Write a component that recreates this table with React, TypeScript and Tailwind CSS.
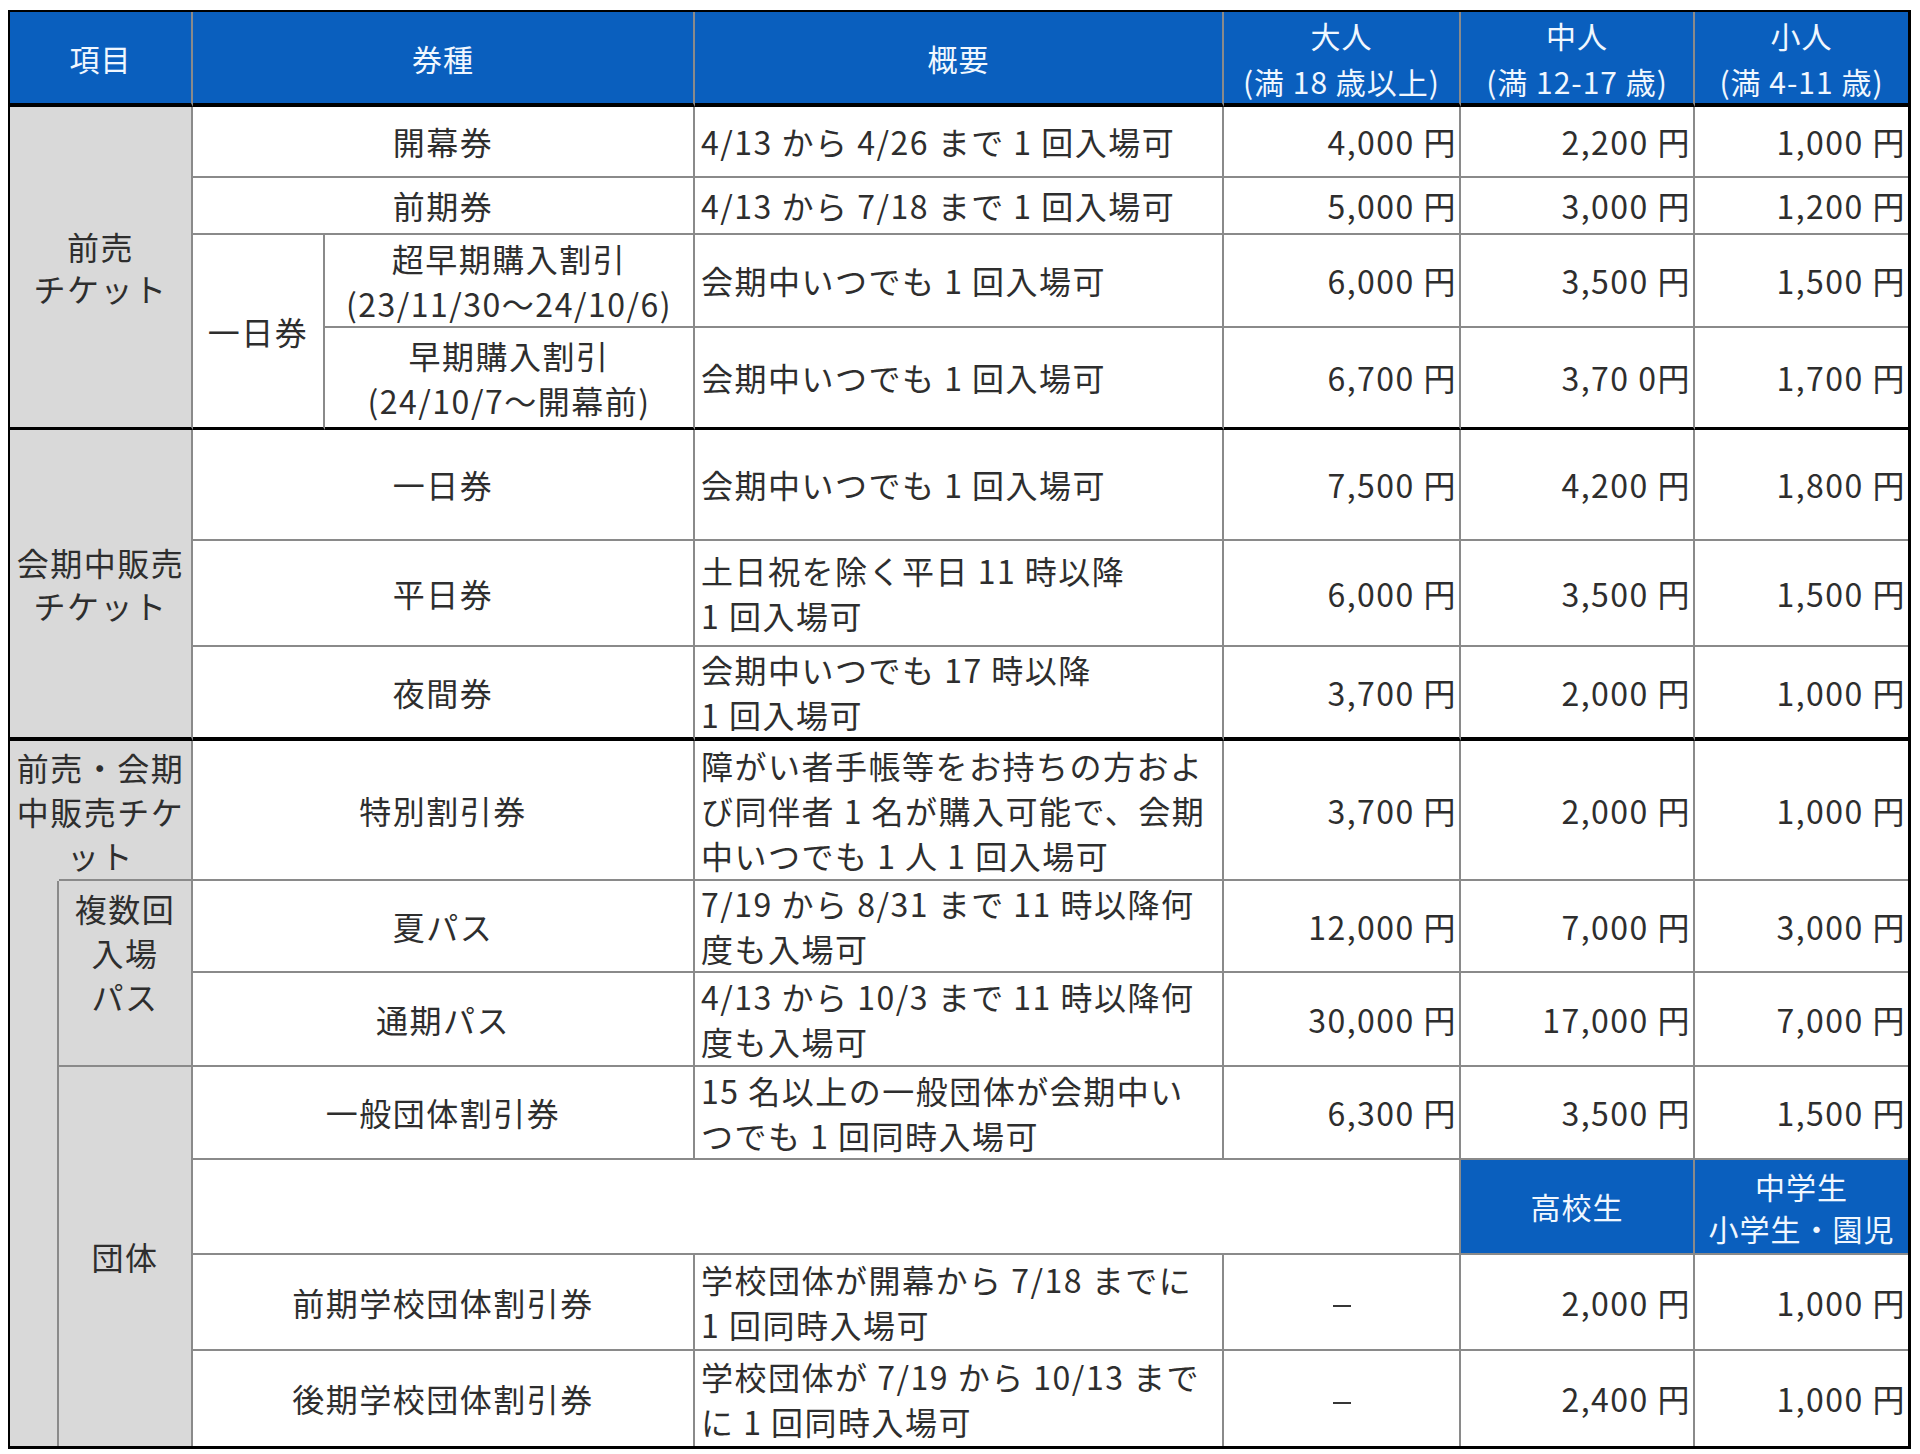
import React from "react";

type Bottom = "thin" | "thick" | "heavy" | "none";

const BOTTOM: Record<Bottom, string> = {
  thin: "border-b-2",
  thick: "border-b-[3px] border-b-black",
  heavy: "border-b-4 border-b-black",
  none: "",
};

// grid rows, written out so tailwind picks them up
const ROW: Record<number, string> = {
  1: "row-start-1",
  2: "row-start-2",
  3: "row-start-3",
  4: "row-start-4",
  5: "row-start-5",
  6: "row-start-6",
  7: "row-start-7",
  8: "row-start-8",
  9: "row-start-9",
  10: "row-start-10",
  11: "row-start-11",
  12: "row-start-12",
  13: "row-start-13",
  14: "row-start-14",
  15: "row-start-15",
};

const Cell = ({
  className = "",
  bottom = "thin",
  last = false,
  children,
}: {
  className?: string;
  bottom?: Bottom;
  last?: boolean;
  children?: React.ReactNode;
}) => (
  <div
    className={`flex items-center border-[#8a8a8a] whitespace-pre ${last ? "" : "border-r-2"} ${BOTTOM[bottom]} ${className}`}
  >
    {children}
  </div>
);

const Head = ({ className = "", last = false, children }: { className?: string; last?: boolean; children: React.ReactNode }) => (
  <Cell
    bottom="heavy"
    last={last}
    className={`row-start-1 justify-center text-center bg-[#0a5fbe] text-[#f0f7ff] text-[30px] tracking-[1px] leading-[46px] ${className}`}
  >
    {children}
  </Cell>
);

const Label = ({ row, bottom = "thin", children }: { row: number; bottom?: Bottom; children: React.ReactNode }) => (
  <Cell bottom={bottom} className={`${ROW[row]} col-start-3 col-span-2 justify-center text-center`}>
    {children}
  </Cell>
);

const Desc = ({ row, bottom = "thin", children }: { row: number; bottom?: Bottom; children: React.ReactNode }) => (
  <Cell bottom={bottom} className={`${ROW[row]} col-start-5 pl-[6px]`}>
    {children}
  </Cell>
);

const Prices = ({ row, bottom = "thin", prices }: { row: number; bottom?: Bottom; prices: string[] }) => (
  <>
    <Cell bottom={bottom} className={`${ROW[row]} col-start-6 ${prices[0] === "－" ? "justify-center" : "justify-end pr-[2px]"}`}>
      {prices[0] === "－" ? <span className="inline-block w-[18px] h-[2px] mt-[8px] bg-[#363636]" /> : prices[0]}
    </Cell>
    <Cell bottom={bottom} className={`${ROW[row]} col-start-7 justify-end pr-[2px]`}>
      {prices[1]}
    </Cell>
    <Cell bottom={bottom} last className={`${ROW[row]} col-start-8 justify-end pr-[2px]`}>
      {prices[2]}
    </Cell>
  </>
);

const simpleRows: { row: number; bottom?: Bottom; label: string; desc: string; prices: string[] }[] = [
  { row: 2, label: "開幕券", desc: "4/13 から 4/26 まで 1 回入場可", prices: ["4,000 円", "2,200 円", "1,000 円"] },
  { row: 3, label: "前期券", desc: "4/13 から 7/18 まで 1 回入場可", prices: ["5,000 円", "3,000 円", "1,200 円"] },
  { row: 6, label: "一日券", desc: "会期中いつでも 1 回入場可", prices: ["7,500 円", "4,200 円", "1,800 円"] },
  { row: 7, label: "平日券", desc: "土日祝を除く平日 11 時以降\n1 回入場可", prices: ["6,000 円", "3,500 円", "1,500 円"] },
  { row: 8, bottom: "heavy", label: "夜間券", desc: "会期中いつでも 17 時以降\n1 回入場可", prices: ["3,700 円", "2,000 円", "1,000 円"] },
  {
    row: 9,
    label: "特別割引券",
    desc: "障がい者手帳等をお持ちの方およ\nび同伴者 1 名が購入可能で、会期\n中いつでも 1 人 1 回入場可",
    prices: ["3,700 円", "2,000 円", "1,000 円"],
  },
  { row: 10, label: "夏パス", desc: "7/19 から 8/31 まで 11 時以降何\n度も入場可", prices: ["12,000 円", "7,000 円", "3,000 円"] },
  { row: 11, label: "通期パス", desc: "4/13 から 10/3 まで 11 時以降何\n度も入場可", prices: ["30,000 円", "17,000 円", "7,000 円"] },
  { row: 12, label: "一般団体割引券", desc: "15 名以上の一般団体が会期中い\nつでも 1 回同時入場可", prices: ["6,300 円", "3,500 円", "1,500 円"] },
  { row: 14, label: "前期学校団体割引券", desc: "学校団体が開幕から 7/18 までに\n1 回同時入場可", prices: ["－", "2,000 円", "1,000 円"] },
  { row: 15, bottom: "none", label: "後期学校団体割引券", desc: "学校団体が 7/19 から 10/13 まで\nに 1 回同時入場可", prices: ["－", "2,400 円", "1,000 円"] },
];

export default function App() {
  return (
    <div className="w-[1920px] h-[1454px] bg-white pt-[10px] pl-[8px] font-['Noto_Sans_CJK_JP',sans-serif]">
      <div className="grid w-max grid-cols-[49px_134px_132px_370px_529px_237px_234px_213px] grid-rows-[95px_71px_57px_93px_102px_111px_106px_94px_140px_92px_94px_93px_95px_96px_95px] border-t-2 border-l-2 border-r-[3px] border-b-[3px] border-black text-[32px] tracking-[1.5px] leading-[45px] text-[#2e2e2e]">
        {/* header */}
        <Head className="col-start-1 col-span-2">項目</Head>
        <Head className="col-start-3 col-span-2">券種</Head>
        <Head className="col-start-5">概要</Head>
        <Head className="col-start-6">{"大人\n(満 18 歳以上)"}</Head>
        <Head className="col-start-7">{"中人\n(満 12-17 歳)"}</Head>
        <Head className="col-start-8" last>
          {"小人\n(満 4-11 歳)"}
        </Head>

        {/* 前売 */}
        <Cell bottom="thick" className="row-start-2 row-span-4 col-start-1 col-span-2 justify-center text-center bg-[#d9d9d9] leading-[42px]">
          {"前売\nチケット"}
        </Cell>
        <Cell bottom="thick" className="row-start-4 row-span-2 col-start-3 justify-center text-center">
          一日券
        </Cell>
        <Cell className="row-start-4 col-start-4 justify-center text-center">{"超早期購入割引\n(23/11/30～24/10/6)"}</Cell>
        <Desc row={4}>会期中いつでも 1 回入場可</Desc>
        <Prices row={4} prices={["6,000 円", "3,500 円", "1,500 円"]} />
        <Cell bottom="thick" className="row-start-5 col-start-4 justify-center text-center">
          {"早期購入割引\n(24/10/7～開幕前)"}
        </Cell>
        <Desc row={5} bottom="thick">
          会期中いつでも 1 回入場可
        </Desc>
        <Prices row={5} bottom="thick" prices={["6,700 円", "3,70 0円", "1,700 円"]} />

        {/* 会期中販売 */}
        <Cell bottom="heavy" className="row-start-6 row-span-3 col-start-1 col-span-2 justify-center text-center bg-[#d9d9d9] leading-[43px]">
          {"会期中販売\nチケット"}
        </Cell>

        {/* 前売・会期中販売 */}
        <Cell bottom="none" className="row-start-9 col-start-1 col-span-2 justify-center text-center bg-[#d9d9d9] leading-[44px]">
          {"前売・会期\n中販売チケ\nット"}
        </Cell>
        <Cell bottom="none" className="row-start-10 row-span-6 col-start-1 bg-[#d9d9d9]" />
        <Cell className="row-start-10 row-span-2 col-start-2 -mt-[2px] border-t-2 items-start justify-center text-center pt-[5px] bg-[#d9d9d9] leading-[44px]">
          {"複数回\n入場\nパス"}
        </Cell>
        <Cell bottom="none" className="row-start-12 row-span-4 col-start-2 justify-center text-center bg-[#d9d9d9]">
          団体
        </Cell>

        {simpleRows.map((r) => (
          <React.Fragment key={r.row}>
            <Label row={r.row} bottom={r.bottom}>
              {r.label}
            </Label>
            <Desc row={r.row} bottom={r.bottom}>
              {r.desc}
            </Desc>
            <Prices row={r.row} bottom={r.bottom} prices={r.prices} />
          </React.Fragment>
        ))}

        {/* school group sub header */}
        <Cell className="row-start-13 col-start-3 col-span-4" />
        <Cell className="row-start-13 col-start-7 justify-center text-center bg-[#0a5fbe] text-[#f0f7ff] text-[30px] tracking-[1px]">
          高校生
        </Cell>
        <Cell last className="row-start-13 col-start-8 justify-center text-center bg-[#0a5fbe] text-[#f0f7ff] text-[30px] tracking-[1px] leading-[42px]">
          {"中学生\n小学生・園児"}
        </Cell>
      </div>
    </div>
  );
}
